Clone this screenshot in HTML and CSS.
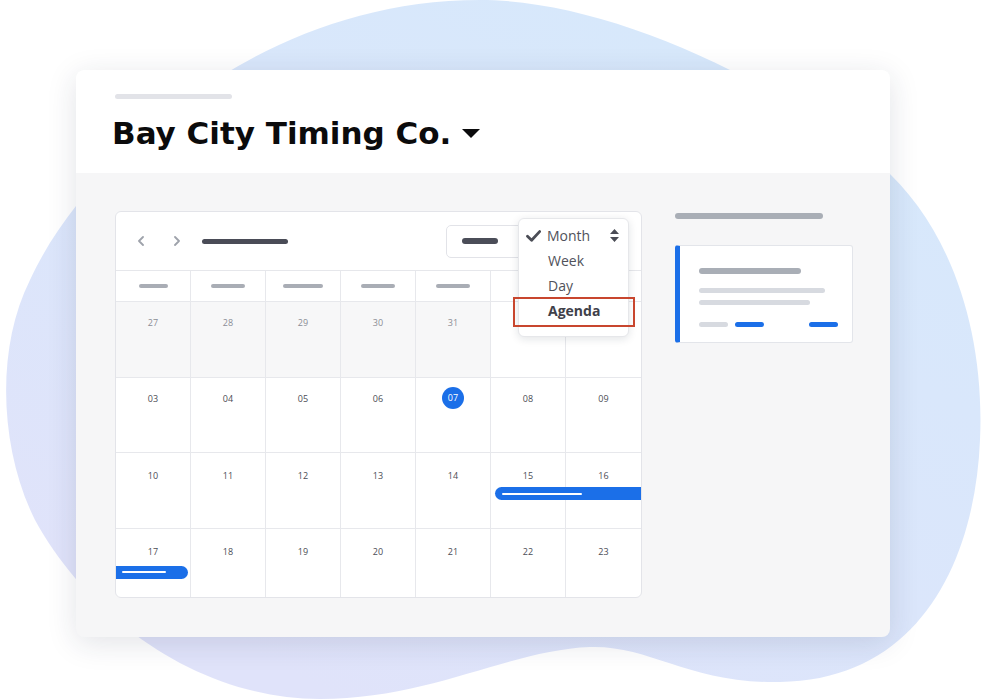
FILE: index.html
```html
<!DOCTYPE html>
<html lang="en">
<head>
<meta charset="utf-8">
<title>Bay City Timing Co.</title>
<link rel="stylesheet" href="styles.css">
</head>
<body>
<div class="stage">
  <svg class="blob" width="982" height="700" viewBox="0 0 982 700" aria-hidden="true">
    <defs>
      <linearGradient id="blobGrad" x1="0.75" y1="0.1" x2="0.2" y2="0.9">
        <stop offset="0" stop-color="#d7e8fb"/>
        <stop offset="0.55" stop-color="#dbe6fb"/>
        <stop offset="1" stop-color="#e0e3fa"/>
      </linearGradient>
    </defs>
    <path fill="url(#blobGrad)" d="M480 0 C600 0 760 70 880 165 C950 225 985 330 980 440 C975 560 920 680 780 682 C690 684 650 645 590 647 C510 650 430 699 320 699 C200 699 90 620 35 520 C0 450 -5 350 30 280 C80 170 250 0 480 0 Z"/>
  </svg>

  <div class="window">
    <header class="win-header">
      <div class="skeleton-top"></div>
      <div class="title-row">
        <h1 class="title">Bay City Timing Co.</h1>
        <svg class="caret" width="18" height="9" viewBox="0 0 18 9"><path d="M0 0 H18 L9 9 Z" fill="#0b0b0c"/></svg>
      </div>
    </header>

    <main class="win-body">
      <section class="calendar">
        <div class="toolbar">
          <svg class="chev" width="6" height="10" viewBox="0 0 6 10"><path d="M5 1 L1 5 L5 9" fill="none" stroke="#9ea2ab" stroke-width="1.8" stroke-linecap="round" stroke-linejoin="round"/></svg>
          <svg class="chev chev-next" width="6" height="10" viewBox="0 0 6 10"><path d="M1 1 L5 5 L1 9" fill="none" stroke="#9ea2ab" stroke-width="1.8" stroke-linecap="round" stroke-linejoin="round"/></svg>
          <div class="month-label"></div>
          <div class="view-select"><div class="view-select-bar"></div></div>
        </div>

        <div class="grid">
          <div class="dow"><span class="dow-bar w29"></span></div>
          <div class="dow"><span class="dow-bar w34"></span></div>
          <div class="dow"><span class="dow-bar w40"></span></div>
          <div class="dow"><span class="dow-bar w34"></span></div>
          <div class="dow"><span class="dow-bar w34"></span></div>
          <div class="dow"><span class="dow-bar w14"></span></div>
          <div class="dow"><span class="dow-bar w29"></span></div>

          <div class="day prev"><span class="num">27</span></div>
          <div class="day prev"><span class="num">28</span></div>
          <div class="day prev"><span class="num">29</span></div>
          <div class="day prev"><span class="num">30</span></div>
          <div class="day prev"><span class="num">31</span></div>
          <div class="day"><span class="num">01</span></div>
          <div class="day"><span class="num">02</span></div>

          <div class="day"><span class="num">03</span></div>
          <div class="day"><span class="num">04</span></div>
          <div class="day"><span class="num">05</span></div>
          <div class="day"><span class="num">06</span></div>
          <div class="day today"><span class="num">07</span></div>
          <div class="day"><span class="num">08</span></div>
          <div class="day"><span class="num">09</span></div>

          <div class="day lower"><span class="num">10</span></div>
          <div class="day lower"><span class="num">11</span></div>
          <div class="day lower"><span class="num">12</span></div>
          <div class="day lower"><span class="num">13</span></div>
          <div class="day lower"><span class="num">14</span></div>
          <div class="day lower"><span class="num">15</span><div class="event event-start"><span class="event-line"></span></div></div>
          <div class="day lower"><span class="num">16</span></div>

          <div class="day lower last"><span class="num">17</span><div class="event event-end"><span class="event-line short"></span></div></div>
          <div class="day lower last"><span class="num">18</span></div>
          <div class="day lower last"><span class="num">19</span></div>
          <div class="day lower last"><span class="num">20</span></div>
          <div class="day lower last"><span class="num">21</span></div>
          <div class="day lower last"><span class="num">22</span></div>
          <div class="day lower last"><span class="num">23</span></div>
        </div>

        <div class="view-menu">
          <div class="menu-item selected">
            <svg class="check" width="15" height="12" viewBox="0 0 15 12"><path d="M1.5 6.2 L5.6 10.2 L13.6 1.6" fill="none" stroke="#4b4d56" stroke-width="2.8" stroke-linecap="round" stroke-linejoin="round"/></svg>
            <span>Month</span>
            <svg class="updown" width="9" height="13" viewBox="0 0 9 13"><path d="M4.5 0 L9 5 H0 Z M0 8 H9 L4.5 13 Z" fill="#4b4d56"/></svg>
          </div>
          <div class="menu-item">Week</div>
          <div class="menu-item">Day</div>
          <div class="menu-item agenda">Agenda</div>
        </div>
      </section>

      <aside class="side">
        <div class="side-bar"></div>
        <div class="event-card">
          <div class="ec-title"></div>
          <div class="ec-line ec-line1"></div>
          <div class="ec-line ec-line2"></div>
          <div class="ec-foot">
            <span class="ec-pill grey"></span>
            <span class="ec-pill blue"></span>
            <span class="ec-pill blue push"></span>
          </div>
        </div>
      </aside>
    </main>
  </div>
</div>
</body>
</html>
```

FILE: styles.css
```css
html, body {
  margin: 0;
  padding: 0;
  background: #ffffff;
}

body {
  font-family: "Open Sans", "Noto Sans", sans-serif;
}

.stage {
  position: relative;
  width: 982px;
  height: 700px;
  overflow: hidden;
}

.blob {
  position: absolute;
  left: 0;
  top: 0;
}

.window {
  position: relative;
  margin: 70px 0 0 76px;
  width: 814px;
  height: 567px;
  border-radius: 8px;
  background: #f6f6f7;
  box-shadow: 0 6px 30px rgba(30, 40, 70, 0.13);
  overflow: hidden;
  display: flex;
  flex-direction: column;
}

/* ---------- header ---------- */
.win-header {
  height: 103px;
  box-sizing: border-box;
  background: #ffffff;
  padding: 24px 0 0 39px;
}

.skeleton-top {
  width: 117px;
  height: 5px;
  border-radius: 3px;
  background: #e2e3e8;
}

.title-row {
  display: flex;
  align-items: center;
  height: 36px;
  margin-top: 16px;
}

.title {
  margin: 0 0 0 -3px;
  font-family: "DejaVu Sans", "Liberation Sans", sans-serif;
  font-weight: 700;
  font-size: 31px;
  line-height: 36px;
  color: #0b0b0c;
}

.caret {
  margin-left: 11px;
  flex: none;
}

/* ---------- body ---------- */
.win-body {
  flex: 1;
  display: flex;
  align-items: flex-start;
  gap: 33px;
  padding: 38px 0 0 39px;
}

.calendar {
  position: relative;
  width: 527px;
  box-sizing: border-box;
  border: 1px solid #e3e4e9;
  border-radius: 6px;
  background: #ffffff;
  overflow: hidden;
}

.toolbar {
  height: 59px;
  box-sizing: border-box;
  border-bottom: 1px solid #e6e7eb;
  display: flex;
  align-items: center;
  padding: 0 15px 0 22px;
}

.chev {
  flex: none;
}

.chev-next {
  margin-left: 30px;
}

.month-label {
  margin-left: 22px;
  width: 86px;
  height: 5px;
  border-radius: 3px;
  background: #4a4c57;
}

.view-select {
  margin-left: auto;
  width: 180px;
  height: 33px;
  box-sizing: border-box;
  border: 1px solid #e2e3e8;
  border-radius: 5px;
  display: flex;
  align-items: center;
  padding-left: 15px;
}

.view-select-bar {
  width: 36px;
  height: 6px;
  border-radius: 3px;
  background: #4b4d58;
}

/* ---------- grid ---------- */
.grid {
  display: grid;
  grid-template-columns: repeat(7, 1fr);
  grid-template-rows: 31px 75.5px 75.5px 75.5px 68.5px;
}

.dow,
.day {
  box-sizing: border-box;
  border-right: 1px solid #e7e8ec;
  border-bottom: 1px solid #e7e8ec;
}

.grid > :nth-child(7n) {
  border-right: 0;
}

.day.last {
  border-bottom: 0;
}

.dow {
  display: flex;
  align-items: center;
  justify-content: center;
}

.dow-bar {
  height: 4px;
  border-radius: 2px;
  background: #a9adb5;
}

.w14 { width: 14px; }
.w29 { width: 29px; }
.w34 { width: 34px; }
.w40 { width: 40px; }

.day {
  position: relative;
  text-align: center;
}

.num {
  display: inline-block;
  width: 22px;
  height: 22px;
  margin-top: 10px;
  line-height: 22px;
  border-radius: 50%;
  font-size: 9px;
  color: #4b4d55;
}

.day.lower .num {
  margin-top: 12px;
}

.day.prev {
  background: #f7f7f8;
}

.day.prev .num {
  color: #8b8d95;
}

.day.today .num {
  margin-top: 9px;
  background: #1b6fe8;
  color: #ffffff;
}

.event {
  position: absolute;
  height: 13px;
  background: #1b6fe8;
  display: flex;
  align-items: center;
  box-sizing: border-box;
}

.event-start {
  top: 34px;
  left: 4px;
  width: calc(200% - 2px);
  border-radius: 7px 0 0 7px;
  padding-left: 7px;
}

.event-end {
  top: 37px;
  left: 0;
  width: 72px;
  border-radius: 0 7px 7px 0;
  padding-left: 6px;
}

.event-line {
  width: 80px;
  height: 2px;
  border-radius: 1px;
  background: #ffffff;
}

.event-line.short {
  width: 44px;
}

/* ---------- view dropdown ---------- */
.view-menu {
  position: absolute;
  left: 402px;
  top: 6px;
  width: 111px;
  height: 119px;
  box-sizing: border-box;
  border: 1px solid #e6e7ea;
  border-radius: 6px;
  background: #ffffff;
  box-shadow: 0 2px 8px rgba(20, 30, 50, 0.12);
  padding-top: 4px;
  z-index: 2;
}

.menu-item {
  position: relative;
  height: 25px;
  display: flex;
  align-items: center;
  padding-left: 29px;
  font-size: 14px;
  color: #50525b;
}

.menu-item.selected {
  padding-left: 7px;
}

.check {
  margin-right: 6px;
  flex: none;
}

.updown {
  margin-left: auto;
  margin-right: 9px;
  flex: none;
}

.menu-item.agenda {
  font-weight: 700;
  color: #3f414a;
}

.menu-item.agenda::after {
  content: "";
  position: absolute;
  top: -1px;
  bottom: -4px;
  left: -6px;
  right: -7px;
  border: 2px solid #c8462e;
}

/* ---------- sidebar ---------- */
.side {
  width: 178px;
  padding-top: 2px;
}

.side-bar {
  width: 148px;
  height: 6px;
  border-radius: 3px;
  background: #a9aeb6;
}

.event-card {
  margin-top: 26px;
  height: 98px;
  box-sizing: border-box;
  border: 1px solid #e3e5ea;
  border-left: 5px solid #1b6fe8;
  border-radius: 3px;
  background: #ffffff;
  padding: 22px 0 0 19px;
}

.ec-title {
  width: 102px;
  height: 6px;
  border-radius: 3px;
  background: #a9aeb6;
}

.ec-line {
  height: 5px;
  border-radius: 3px;
  background: #d7dae0;
}

.ec-line1 {
  width: 126px;
  margin-top: 14px;
}

.ec-line2 {
  width: 111px;
  margin-top: 7px;
}

.ec-foot {
  width: 139px;
  margin-top: 17px;
  display: flex;
}

.ec-pill {
  width: 29px;
  height: 5px;
  border-radius: 3px;
}

.ec-pill.grey {
  background: #d7dae0;
}

.ec-pill.blue {
  background: #1b6fe8;
  margin-left: 7px;
}

.ec-pill.blue.push {
  margin-left: auto;
}
```
